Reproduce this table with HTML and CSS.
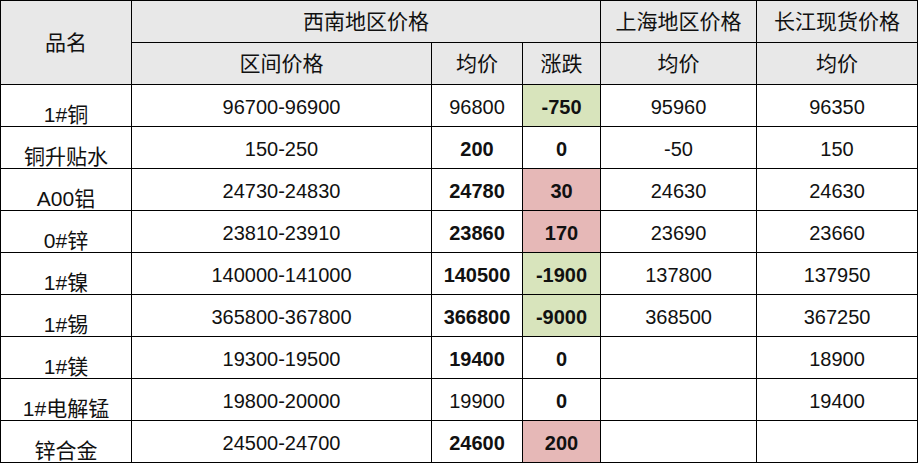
FILE: index.html
```html
<!DOCTYPE html>
<html lang="zh">
<head>
<meta charset="utf-8">
<title>价格表</title>
<link rel="stylesheet" href="styles.css">
</head>
<body>
<table class="price-table">
  <colgroup>
    <col class="c-name">
    <col class="c-range">
    <col class="c-avg">
    <col class="c-chg">
    <col class="c-sh">
    <col class="c-cj">
  </colgroup>
  <thead>
    <tr>
      <th rowspan="2" class="h-name">品名</th>
      <th colspan="3">西南地区价格</th>
      <th>上海地区价格</th>
      <th>长江现货价格</th>
    </tr>
    <tr>
      <th>区间价格</th>
      <th>均价</th>
      <th>涨跌</th>
      <th>均价</th>
      <th>均价</th>
    </tr>
  </thead>
  <tbody>
    <tr><td class="name">1#铜</td><td>96700-96900</td><td>96800</td><td class="chg down">-750</td><td>95960</td><td>96350</td></tr>
    <tr><td class="name">铜升贴水</td><td>150-250</td><td class="b">200</td><td class="chg">0</td><td>-50</td><td>150</td></tr>
    <tr><td class="name">A00铝</td><td>24730-24830</td><td class="b">24780</td><td class="chg up">30</td><td>24630</td><td>24630</td></tr>
    <tr><td class="name">0#锌</td><td>23810-23910</td><td class="b">23860</td><td class="chg up">170</td><td>23690</td><td>23660</td></tr>
    <tr><td class="name">1#镍</td><td>140000-141000</td><td class="b">140500</td><td class="chg down">-1900</td><td>137800</td><td>137950</td></tr>
    <tr><td class="name">1#锡</td><td>365800-367800</td><td class="b">366800</td><td class="chg down">-9000</td><td>368500</td><td>367250</td></tr>
    <tr><td class="name">1#镁</td><td>19300-19500</td><td class="b">19400</td><td class="chg">0</td><td></td><td>18900</td></tr>
    <tr><td class="name">1#电解锰</td><td>19800-20000</td><td>19900</td><td class="chg">0</td><td></td><td>19400</td></tr>
    <tr><td class="name">锌合金</td><td>24500-24700</td><td class="b">24600</td><td class="chg up">200</td><td></td><td></td></tr>
  </tbody>
</table>
</body>
</html>
```
FILE: styles.css
```css
html, body {
  margin: 0;
  padding: 0;
  background: #ffffff;
}

.price-table {
  border-collapse: collapse;
  table-layout: fixed;
  width: 918px;
  font-family: "Liberation Sans", "Noto Sans CJK SC", sans-serif;
  color: #111;
}

.c-name { width: 131px; }
.c-range { width: 300px; }
.c-avg { width: 91px; }
.c-chg { width: 78px; }
.c-sh { width: 156px; }
.c-cj { width: 161px; }

.price-table tr {
  height: 42px;
}

.price-table th,
.price-table td {
  border: 1px solid #000;
  padding: 0;
  text-align: center;
  vertical-align: middle;
  white-space: nowrap;
}

.price-table th {
  background: #e8e8e8;
  font-weight: normal;
  font-size: 21px;
  line-height: 24px;
}

.price-table td {
  font-size: 20px;
  line-height: 22px;
  padding-top: 2px;
}

.price-table td.name {
  font-size: 21px;
  vertical-align: bottom;
  padding-top: 0;
  line-height: 22px;
}

.price-table td.b,
.price-table td.chg {
  font-weight: bold;
}

.price-table td.down {
  background: #d8e4bc;
}

.price-table td.up {
  background: #e6b8b7;
}
```
